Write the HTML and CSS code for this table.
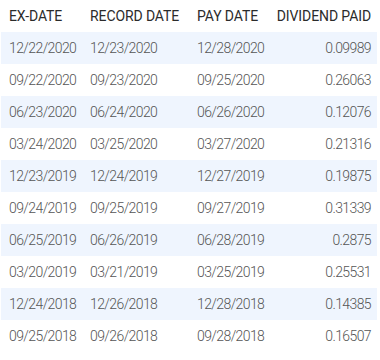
FILE: index.html
```html
<!DOCTYPE html>
<html lang="en">
<head>
    <meta charset="UTF-8">
    <meta name="viewport" content="width=device-width, initial-scale=1.0">
    <title>Dividend History</title>
    <link rel="stylesheet" href="styles.css">
</head>
<body>
    <table class="dividends">
        <colgroup>
            <col class="col-ex">
            <col class="col-record">
            <col class="col-pay">
            <col class="col-amount">
        </colgroup>
        <thead>
            <tr>
                <th>Ex-Date</th>
                <th>Record Date</th>
                <th>Pay Date</th>
                <th class="amount">Dividend Paid</th>
            </tr>
        </thead>
        <tbody>
            <tr><td>12/22/2020</td><td>12/23/2020</td><td>12/28/2020</td><td class="amount">0.09989</td></tr>
            <tr><td>09/22/2020</td><td>09/23/2020</td><td>09/25/2020</td><td class="amount">0.26063</td></tr>
            <tr><td>06/23/2020</td><td>06/24/2020</td><td>06/26/2020</td><td class="amount">0.12076</td></tr>
            <tr><td>03/24/2020</td><td>03/25/2020</td><td>03/27/2020</td><td class="amount">0.21316</td></tr>
            <tr><td>12/23/2019</td><td>12/24/2019</td><td>12/27/2019</td><td class="amount">0.19875</td></tr>
            <tr><td>09/24/2019</td><td>09/25/2019</td><td>09/27/2019</td><td class="amount">0.31339</td></tr>
            <tr><td>06/25/2019</td><td>06/26/2019</td><td>06/28/2019</td><td class="amount">0.2875</td></tr>
            <tr><td>03/20/2019</td><td>03/21/2019</td><td>03/25/2019</td><td class="amount">0.25531</td></tr>
            <tr><td>12/24/2018</td><td>12/26/2018</td><td>12/28/2018</td><td class="amount">0.14385</td></tr>
            <tr><td>09/25/2018</td><td>09/26/2018</td><td>09/28/2018</td><td class="amount">0.16507</td></tr>
        </tbody>
    </table>
</body>
</html>
```

FILE: styles.css
```css
body {
    margin: 0;
    padding: 0 3px 0 1px;
    font-family: Roboto, 'Open Sans', sans-serif;
    background-color: #fff;
}
.dividends {
    width: 376px;
    border-collapse: collapse;
    table-layout: fixed;
}
.col-ex {
    width: 81px;
}
.col-record {
    width: 107px;
}
.col-pay {
    width: 81px;
}
.dividends th,
.dividends td {
    height: 32px;
    padding: 0 0 0 8px;
    text-align: left;
    white-space: nowrap;
}
.dividends th {
    font-size: 14px;
    font-weight: 400;
    color: #2b2b2b;
    text-transform: uppercase;
    letter-spacing: -0.1px;
}
.dividends td {
    font-size: 14px;
    font-weight: 300;
    color: #555;
    letter-spacing: -0.6px;
}
.dividends .amount {
    text-align: right;
    padding: 0 6px 0 0;
}
.dividends tbody tr:nth-child(odd) {
    background-color: #eff5fe;
}
```
